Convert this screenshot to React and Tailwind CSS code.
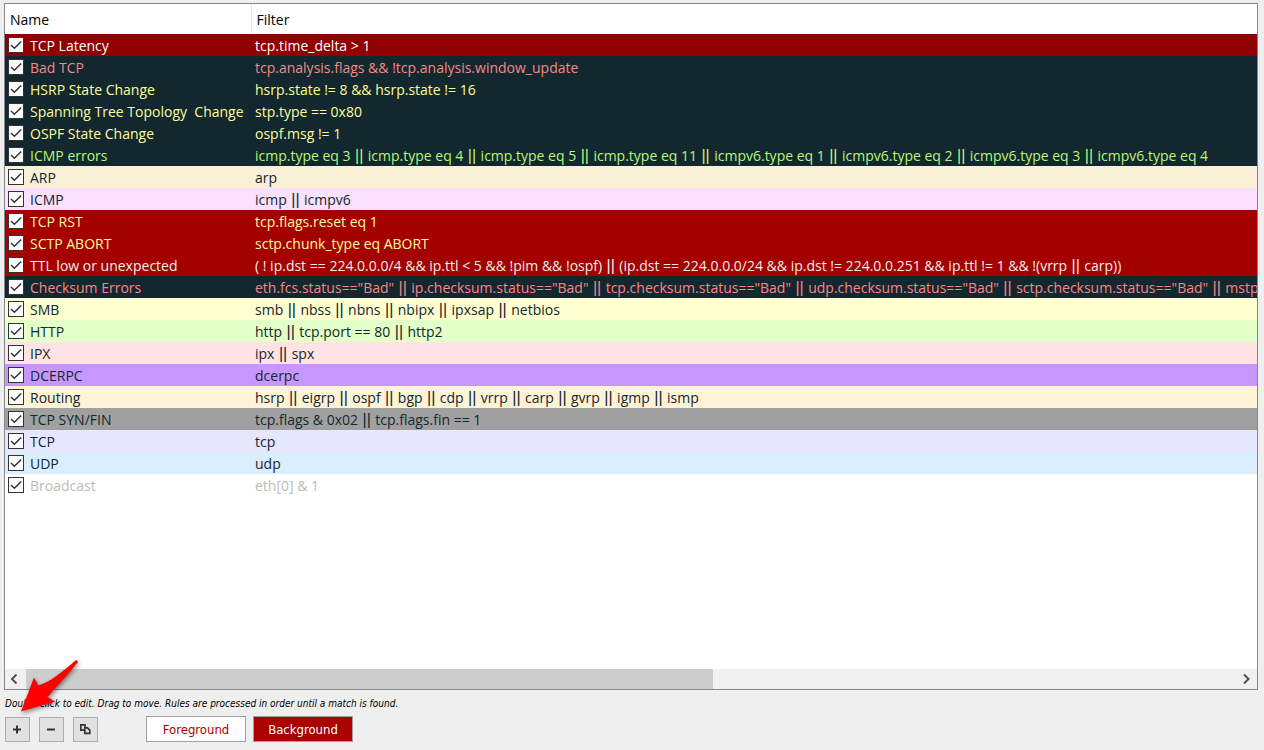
const rules = [
  { name: "TCP Latency", filter: "tcp.time_delta > 1", tone: "bg-[#8f0000] text-white" },
  { name: "Bad TCP", filter: "tcp.analysis.flags && !tcp.analysis.window_update", tone: "bg-[#12272e] text-[#f78787]" },
  { name: "HSRP State Change", filter: "hsrp.state != 8 && hsrp.state != 16", tone: "bg-[#12272e] text-[#fffc9c]" },
  { name: "Spanning Tree Topology  Change", filter: "stp.type == 0x80", tone: "bg-[#12272e] text-[#fffc9c]" },
  { name: "OSPF State Change", filter: "ospf.msg != 1", tone: "bg-[#12272e] text-[#fffc9c]" },
  {
    name: "ICMP errors",
    filter:
      "icmp.type eq 3 || icmp.type eq 4 || icmp.type eq 5 || icmp.type eq 11 || icmpv6.type eq 1 || icmpv6.type eq 2 || icmpv6.type eq 3 || icmpv6.type eq 4",
    tone: "bg-[#12272e] text-[#b7f774]",
  },
  { name: "ARP", filter: "arp", tone: "bg-[#faf0d7] text-[#12272e]" },
  { name: "ICMP", filter: "icmp || icmpv6", tone: "bg-[#fce0ff] text-[#12272e]" },
  { name: "TCP RST", filter: "tcp.flags.reset eq 1", tone: "bg-[#a40000] text-[#fffc9c]" },
  { name: "SCTP ABORT", filter: "sctp.chunk_type eq ABORT", tone: "bg-[#a40000] text-[#fffc9c]" },
  {
    name: "TTL low or unexpected",
    filter:
      "( ! ip.dst == 224.0.0.0/4 && ip.ttl < 5 && !pim && !ospf) || (ip.dst == 224.0.0.0/24 && ip.dst != 224.0.0.251 && ip.ttl != 1 && !(vrrp || carp))",
    tone: "bg-[#a40000] text-[#eeeeec]",
  },
  {
    name: "Checksum Errors",
    filter:
      'eth.fcs.status=="Bad" || ip.checksum.status=="Bad" || tcp.checksum.status=="Bad" || udp.checksum.status=="Bad" || sctp.checksum.status=="Bad" || mstp.checksum.status=="Bad"',
    tone: "bg-[#12272e] text-[#f78787]",
  },
  { name: "SMB", filter: "smb || nbss || nbns || nbipx || ipxsap || netbios", tone: "bg-[#feffd0] text-[#12272e]" },
  { name: "HTTP", filter: "http || tcp.port == 80 || http2", tone: "bg-[#e4ffc7] text-[#12272e]" },
  { name: "IPX", filter: "ipx || spx", tone: "bg-[#ffe3e5] text-[#12272e]" },
  { name: "DCERPC", filter: "dcerpc", tone: "bg-[#c797ff] text-[#12272e]" },
  {
    name: "Routing",
    filter: "hsrp || eigrp || ospf || bgp || cdp || vrrp || carp || gvrp || igmp || ismp",
    tone: "bg-[#fff3d6] text-[#12272e]",
  },
  { name: "TCP SYN/FIN", filter: "tcp.flags & 0x02 || tcp.flags.fin == 1", tone: "bg-[#a0a0a0] text-[#12272e]" },
  { name: "TCP", filter: "tcp", tone: "bg-[#e7e6ff] text-[#12272e]" },
  { name: "UDP", filter: "udp", tone: "bg-[#daeeff] text-[#12272e]" },
  { name: "Broadcast", filter: "eth[0] & 1", tone: "bg-white text-[#babdb6]" },
];

// The "or" operator is set in a face with narrow bars.
function FilterText({ text }) {
  return text.split(/( \|\| )/).map((part, i) =>
    part === " || " ? (
      <span key={i} className="font-['Liberation_Sans',sans-serif] text-base leading-none">
        {part}
      </span>
    ) : (
      part
    ),
  );
}

function RuleRow({ rule, id }) {
  return (
    <tr className={rule.tone}>
      <td className="h-[22px] p-0 pl-[3px]">
        <div className="flex items-center gap-[6px]">
          <span className="grid size-4 shrink-0">
            <input
              id={id}
              type="checkbox"
              defaultChecked
              className="peer col-start-1 row-start-1 size-4 appearance-none border border-[#333333] bg-white"
            />
            <svg
              viewBox="0 0 16 16"
              className="pointer-events-none invisible col-start-1 row-start-1 size-4 peer-checked:visible"
              fill="none"
              stroke="#333333"
              strokeWidth="1.5"
            >
              <path d="M3 8 L6.4 11.3 L13.2 4.5" />
            </svg>
          </span>
          <label htmlFor={id} className="pt-[2px] leading-5 whitespace-pre">
            {rule.name}
          </label>
        </div>
      </td>
      <td className="h-[22px] overflow-hidden p-0 pt-[2px] pl-1 leading-5 whitespace-pre">
        <FilterText text={rule.filter} />
      </td>
    </tr>
  );
}

function ScrollArrow({ label, d }) {
  return (
    <button type="button" aria-label={label} className="flex h-5 w-[21px] shrink-0 items-center justify-center">
      <svg viewBox="0 0 11 10" className="h-[10px] w-[11px]" fill="none" stroke="#505050" strokeWidth="2">
        <path d={d} />
      </svg>
    </button>
  );
}

function ToolButton({ label, children }) {
  return (
    <button
      type="button"
      aria-label={label}
      className="flex size-[25px] items-center justify-center border border-[#adadad] bg-[#e1e1e1]"
    >
      <svg viewBox="0 0 11 11" className="size-[11px]" fill="none" stroke="#333333">
        {children}
      </svg>
    </button>
  );
}

export default function App() {
  return (
    <main className="flex h-screen flex-col bg-[#efefef] pt-[3px] pr-[6px] pb-2 pl-1 font-['Open_Sans','Noto_Sans',sans-serif] text-sm text-black">
      <section className="flex min-h-0 flex-1 flex-col border border-[#828790] bg-white">
        <div className="min-h-0 flex-1 overflow-hidden">
          <table className="w-full table-fixed border-collapse leading-[22px]">
            <colgroup>
              <col className="w-[246px]" />
              <col />
            </colgroup>
            <thead>
              <tr>
                <th className="h-[30px] border-r border-[#e5e5e5] p-0 pt-[2px] pl-[5px] text-left font-normal">
                  Name
                </th>
                <th className="h-[30px] p-0 pt-[2px] pl-[5px] text-left font-normal">Filter</th>
              </tr>
            </thead>
            <tbody>
              {rules.map((rule, i) => (
                <RuleRow key={rule.name} rule={rule} id={`rule-${i}`} />
              ))}
            </tbody>
          </table>
        </div>
        <div className="flex h-5 bg-[#f0f0f0]">
          <ScrollArrow label="Scroll left" d="M6.5 0.5 L2 5 L6.5 9.5" />
          <div className="min-w-0 flex-1">
            <div className="h-5 w-[56.8%] bg-[#cdcdcd]" />
          </div>
          <ScrollArrow label="Scroll right" d="M3 0.5 L7.5 5 L3 9.5" />
        </div>
      </section>

      <footer className="relative font-['DejaVu_Sans_Condensed','DejaVu_Sans',sans-serif]">
        <p className="pt-[6px] pl-px text-[10px] leading-4 italic">
          Double click to edit. Drag to move. Rules are processed in order until a match is found.
        </p>
        <div className="flex items-center gap-[9px] pt-1 pl-px">
          <ToolButton label="Add rule">
            <path d="M5 1.5 V9.5 M1 5.5 H9" strokeWidth="2" />
          </ToolButton>
          <ToolButton label="Remove rule">
            <path d="M1 5.5 H9" strokeWidth="2" />
          </ToolButton>
          <ToolButton label="Copy rule">
            <path d="M4 6.2 H0.8 V0.8 H5 V3" strokeWidth="1.7" />
            <path d="M4.8 3.8 H7.4 L9.8 6.2 V9.4 H4.8 Z" strokeWidth="1.7" />
          </ToolButton>
          <div className="flex gap-[7px] pl-[39px] text-[13px]">
            <button type="button" className="h-[26px] w-[100px] border border-[#a0a0a0] bg-white pt-[2px] text-[#aa0000]">
              Foreground
            </button>
            <button type="button" className="h-[26px] w-[100px] border border-[#a0a0a0] bg-[#aa0000] pt-[2px] text-white">
              Background
            </button>
          </div>
        </div>
        <svg
          viewBox="0 0 70 64"
          className="pointer-events-none absolute -top-[34px] left-[11px] h-16 w-[70px] drop-shadow-[1px_2px_2px_rgba(0,0,0,0.45)]"
          fill="#ff0000"
          aria-hidden="true"
        >
          <path d="M6 55.5 L19 21.5 L23.5 29.5 C37 25 48 15 60.5 4.5 Q62 3.5 63 6 C53 19 42 30 32.5 41 L40 45.5 Z" />
        </svg>
      </footer>
    </main>
  );
}
